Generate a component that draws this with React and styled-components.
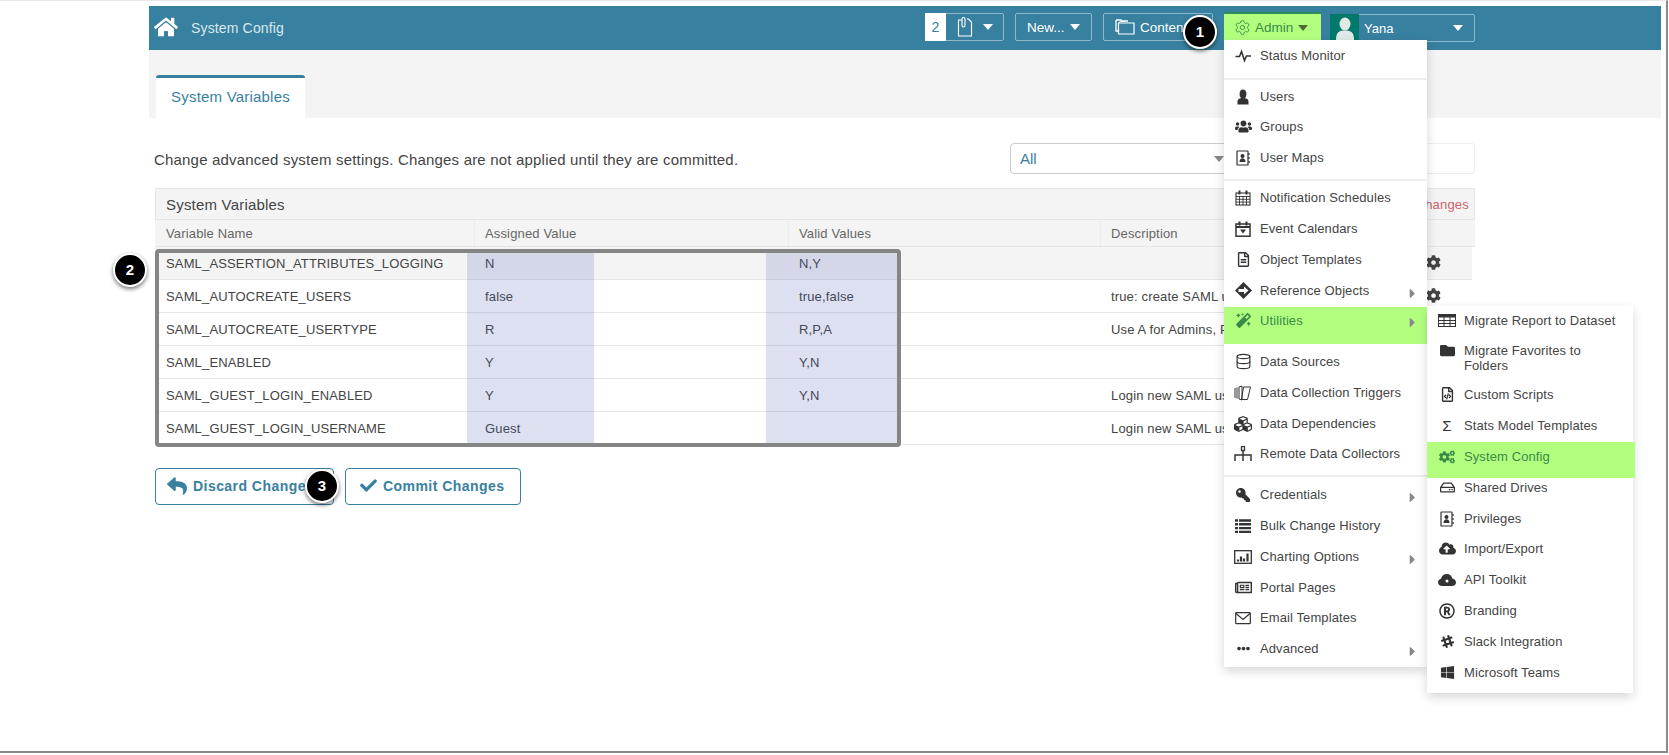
import React from "react";
import styled, { createGlobalStyle } from "styled-components";
import {
  FaHome, FaUsers, FaRegFileAlt, FaMagic, FaCubes, FaKey,
  FaRegNewspaper, FaEllipsisH, FaFolder, FaRegFileCode, FaCogs,
  FaRegHdd, FaCloudUploadAlt, FaRegRegistered, FaSlackHash, FaWindows, FaReply, FaCheck, FaCog,
  FaCaretRight,
} from "react-icons/fa";
import { Database, Settings } from "lucide-react";

const Global = createGlobalStyle`
  html, body { margin: 0; padding: 0; background: #fff; }
  body { font-family: "Liberation Sans", Arial, sans-serif; overflow: hidden; }
  * { box-sizing: border-box; }
`;

const Frame = styled.div`
  position: relative;
  width: 1668px;
  height: 753px;
  padding: 6px 5px 0 149px;
  background: #fff;
  border-top: 1px solid #e8e8e8;
  border-right: 2px solid #8a8a8a;
  border-bottom: 2px solid #8a8a8a;
  overflow: hidden;
`;
const Bar = styled.header`
  height: 44px;
  margin-top: -1px;
  background: #38809f;
  display: flex;
  align-items: flex-start;
  padding: 7px 186px 0 5px;
`;
const Home = styled.div`
  color: #fff;
  font-size: 24px;
  line-height: 0;
  margin-top: 2px;
`;
const Crumb = styled.div`
  color: #d9e8ee;
  font-size: 14px;
  letter-spacing: 0.15px;
  line-height: 16px;
  margin: 7px auto 0 13px;
`;
const NavBtn = styled.div`
  display: flex;
  align-items: center;
  width: ${(p) => p.$w}px;
  height: 28px;
  margin-left: ${(p) => p.$ml ?? 11}px;
  border: 1px solid #8fb9ca;
  border-radius: 2px;
  color: #fff;
  font-size: 13.5px;
  padding-left: ${(p) => p.$pl ?? 0}px;
`;
const NavIcon = styled.span`
  display: flex;
  margin-left: ${(p) => p.$ml}px;
`;
const NavText = styled.span`
  margin-left: 5px;
`;
const Count = styled.span`
  width: 21px;
  height: 28px;
  margin: -1px 0 -1px -1px;
  background: #fff;
  color: #38809f;
  font-size: 14px;
  line-height: 28px;
  text-align: center;
`;
const Caret = styled.span`
  display: inline-block;
  width: 0;
  height: 0;
  border-left: 5.5px solid transparent;
  border-right: 5.5px solid transparent;
  border-top: 6px solid ${(p) => p.$c || "#fff"};
  margin-left: ${(p) => p.$ml ?? 5}px;
  margin-right: ${(p) => p.$mr ?? 0}px;
`;
const AdminBtn = styled.div`
  display: flex;
  align-items: center;
  width: 97px;
  height: 29px;
  margin: -1px 0 0 11px;
  padding-left: 10px;
  background: #b2ff80;
  border-top: 2px solid #2e8b57;
  color: #3a8a46;
  font-size: 13.5px;
  gap: 4px;
`;
const UserBtn = styled.div`
  display: flex;
  align-items: center;
  width: 145px;
  height: 28px;
  margin: 1px 0 0 9px;
  border: 1px solid #8fb9ca;
  border-radius: 2px;
  color: #fff;
  font-size: 13px;
`;
const Avatar = styled.span`
  width: 29px;
  height: 28px;
  margin: -1px 0 -1px -1px;
  background: #00796b;
  color: #dfe9e6;
  display: flex;
  align-items: center;
  justify-content: center;
  overflow: hidden;
`;
const UserName = styled.span`
  margin: 0 auto 0 5px;
`;
const Band = styled.div`
  height: 68px;
  background: #f4f4f4;
  padding: 25px 0 0 7px;
`;
const Tab = styled.div`
  width: 149px;
  height: 43px;
  background: #fff;
  border-top: 3px solid #38809f;
  border-radius: 3px 3px 0 0;
  color: #38809f;
  font-size: 15px;
  letter-spacing: 0.2px;
  line-height: 37px;
  text-align: center;
`;
const Main = styled.main`
  width: 1326px;
  padding: 25px 0 0 6px;
`;
const Intro = styled.div`
  display: flex;
  align-items: center;
  height: 31px;
`;
const IntroText = styled.p`
  margin: 1px auto 0 -1px;
  font-size: 15px;
  letter-spacing: 0.19px;
  color: #444;
`;
const Select = styled.div`
  width: 225px;
  height: 31px;
  border: 1px solid #ccc;
  border-radius: 4px 0 0 4px;
  display: flex;
  align-items: center;
  justify-content: space-between;
  padding: 0 10px 0 9px;
  color: #38809f;
  font-size: 15px;
`;
const Search = styled.div`
  width: 240px;
  height: 31px;
  border: 1px solid #eee;
  border-left: 0;
  border-radius: 0 4px 4px 0;
`;
const Table = styled.section`
  margin-top: 14px;
`;
const TitleRow = styled.div`
  height: 32px;
  display: flex;
  align-items: center;
  justify-content: space-between;
  padding: 0 5px 0 10px;
  background: #f4f4f4;
  border: 1px solid #e6e6e6;
  font-size: 15px;
  letter-spacing: 0.2px;
  color: #444;
`;
const Pending = styled.span`
  color: #c9636b;
  font-size: 13px;
`;
const Grid = styled.div`
  display: grid;
  grid-template-columns: 319px 314px 312px 1fr 46px;
  height: ${(p) => p.$h}px;
  align-items: center;
  margin-right: ${(p) => (p.$head ? 0 : 3)}px;
  background: ${(p) => (p.$shade ? "#f4f4f4" : "#fff")};
  border-bottom: 1px solid #e6e6e6;
  font-size: 13px;
  letter-spacing: 0.15px;
  color: ${(p) => (p.$head ? "#666" : "#444")};
`;
const Cell = styled.div`
  padding: 0 0 0 11px;
  white-space: nowrap;
  overflow: hidden;
  height: 100%;
  display: flex;
  align-items: center;
  box-shadow: ${(p) => (p.$sep ? "inset 1px 0 0 #ececec" : "none")};
`;
const GearCell = styled.div`
  color: #444;
  line-height: 0;
  margin-top: -2px;
`;
const Actions = styled.div`
  display: flex;
  gap: 11px;
  margin-top: 23px;
`;
const Action = styled.button`
  display: flex;
  align-items: center;
  gap: ${(p) => p.$gap}px;
  width: ${(p) => p.$w}px;
  height: 37px;
  padding: 0 0 2px ${(p) => p.$pl}px;
  background: #fff;
  border: 1px solid #38809f;
  border-radius: 4px;
  color: #38809f;
  font: bold 14px "Liberation Sans", Arial, sans-serif;
  letter-spacing: 0.45px;
  white-space: nowrap;
  overflow: hidden;
`;
const Highlight = styled.div`
  position: absolute;
  top: 249px;
  height: 195px;
  left: ${(p) => p.$x}px;
  width: ${(p) => p.$w}px;
  background: rgba(80, 100, 180, 0.2);
`;
const Box = styled.div`
  position: absolute;
  left: 155px;
  top: 248px;
  width: 746px;
  height: 198px;
  border: 4px solid #858585;
  border-radius: 4px;
`;
const Badge = styled.div`
  position: absolute;
  left: ${(p) => p.$x - 17}px;
  top: ${(p) => p.$y - 17}px;
  width: 34px;
  height: 34px;
  border-radius: 50%;
  background: #000;
  border: 2px solid #fff;
  box-shadow: 0 2px 4px rgba(0, 0, 0, 0.55);
  color: #fff;
  font-size: 15px;
  font-weight: bold;
  line-height: 30px;
  text-align: center;
`;
const Menu = styled.nav`
  position: absolute;
  left: ${(p) => p.$x}px;
  top: ${(p) => p.$y}px;
  width: ${(p) => p.$w}px;
  padding-bottom: ${(p) => p.$pb}px;
  background: #fff;
  box-shadow: 0 4px 10px rgba(0, 0, 0, 0.16);
`;
const Section = styled.div`
  padding: ${(p) => p.$pt}px 0 ${(p) => p.$pb}px;
  border-bottom: ${(p) => (p.$line ? "2px solid #eee" : "0")};
`;
const Item = styled.div`
  position: relative;
  display: flex;
  align-items: flex-start;
  gap: 7px;
  height: ${(p) => p.$h || 31}px;
  margin-top: ${(p) => p.$mt || 0}px;
  margin-right: ${(p) => p.$mr || 0}px;
  padding: ${(p) => p.$pt ?? 8}px 14px 0 ${(p) => p.$pl}px;
  background: ${(p) => (p.$on ? "#b2ff80" : "transparent")};
  color: ${(p) => (p.$on ? "#3a8a46" : "#444")};
  font-size: 13px;
  letter-spacing: 0.1px;
  line-height: 15px;
`;
const Glyph = styled.span`
  flex: 0 0 20px;
  height: 15px;
  display: flex;
  align-items: center;
  justify-content: center;
  font-size: 15px;
  color: ${(p) => (p.$on ? "#3a8a46" : "#333")};
`;
const Flip = styled.span`
  display: flex;
  transform: scaleX(-1);
`;
const Sub = styled.span`
  position: absolute;
  right: 7px;
  top: ${(p) => p.$t ?? 11}px;
  color: #888;
  display: flex;
`;

const Svg = ({ w = 16, h = 16, vb, children }) => (
  <svg width={w} height={h} viewBox={vb || `0 0 ${w} ${h}`} fill="none" stroke="currentColor">{children}</svg>
);
const Pulse = () => (
  <Svg w={17}><path d="M0.5 8.5h4l2-5 3 9 2-4.500h4.500" strokeWidth="1.6" /></Svg>
);
const UserIcon = () => (
  <Svg w={14}>
    <ellipse cx="7" cy="5" rx="3.400" ry="4.500" fill="currentColor" stroke="none" />
    <path d="M1.500 15.500v-3c0-2.500 2.500-3.500 5.500-3.500s5.500 1 5.500 3.500v3z" fill="currentColor" stroke="none" />
  </Svg>
);
const BookIcon = () => (
  <Svg>
    <rect x="2" y="1" width="11" height="14" strokeWidth="1.2" rx="0.6" />
    <path d="M14 3v2M14 7v2M14 11v2" strokeWidth="1.2" />
    <circle cx="7.500" cy="6" r="2" fill="currentColor" stroke="none" />
    <path d="M4.500 12c0-5 6-5 6 0z" fill="currentColor" stroke="none" />
  </Svg>
);
const GridCal = () => (
  <Svg>
    <rect x="1" y="3" width="14" height="12" strokeWidth="1.100" />
    <path d="M1 6.500h14M1 9.300h14M1 12.100h14M4.500 6v9M8 6v9M11.500 6v9" strokeWidth="0.9" />
    <path d="M4.500 0.500v4M11.500 0.500v4" strokeWidth="2" />
  </Svg>
);
const EventCal = () => (
  <Svg>
    <rect x="1" y="3" width="14" height="12.200" strokeWidth="1.500" />
    <path d="M1 6h14" strokeWidth="2" />
    <path d="M4.500 0.500v4M11.500 0.500v4" strokeWidth="2" />
    <path d="M5 8.500h6L8 12.500z" fill="currentColor" stroke="none" />
  </Svg>
);
const SignIcon = () => (
  <Svg w={17} h={17}>
    <path d="M8.500 0L17 8.500 8.500 17 0 8.500z" fill="currentColor" stroke="none" />
    <path d="M3.500 7h5.500V4.500l4.500 4-4.500 4V10H3.500z" fill="#fff" stroke="none" />
  </Svg>
);
const CardsIcon = () => (
  <Svg w={18}>
    <path d="M1 3v10M3 2.500v11" strokeWidth="1" />
    <path d="M5 2l3-1v14l-3-1zM9.500 2h7l-3 12.500h-6z" strokeWidth="1" />
  </Svg>
);
const TreeIcon = () => (
  <Svg w={18}>
    <rect x="7.500" y="0.500" width="3" height="4" strokeWidth="1.300" />
    <path d="M9 4.500V15M1 15V9h16v6" strokeWidth="1.500" />
  </Svg>
);
const ChartIcon = () => (
  <Svg w={18}>
    <rect x="0.700" y="1.700" width="16.600" height="12.600" strokeWidth="1.300" />
    <path d="M4 12.500v-2M7 12.500v-5M10 12.500v-3M13.500 12.500v-8" strokeWidth="2.200" />
  </Svg>
);
const CloudGear = () => (
  <Svg w={18}>
    <path d="M4.500 14C1.500 14 0 12.300 0 10.200 0 8.300 1.300 7 3 6.700 3.600 3.800 6 2 8.800 2c3 0 5 2 5.500 4.600C16.400 7 18 8.400 18 10.400 18 12.500 16.300 14 14 14z" fill="currentColor" stroke="none" />
    <circle cx="9" cy="9" r="1.500" fill="#fff" stroke="none" />
  </Svg>
);
const ClipDoc = () => (
  <Svg w={16} h={20}>
    <path d="M5 3H1.500v16h13V5L11.500 2H10M5 3v5.500a1.500 1.500 0 0 0 3 0V2a1.500 1.500 0 0 0-3 0v1z" strokeWidth="1.100" />
  </Svg>
);
const Folders = () => (
  <Svg w={20} h={18}>
    <path d="M1 2h5l1 1h6M1 2v11h2" strokeWidth="1.300" />
    <path d="M3.500 5h15.500v11H3.500z" strokeWidth="1.200" />
    <path d="M3.500 5l2-1.500h5" strokeWidth="1" />
  </Svg>
);
const ThList = () => (
  <Svg>
    <path d="M0 2.500h3M4 2.500h12M0 6.300h3M4 6.300h12M0 10.100h3M4 10.100h12M0 13.900h3M4 13.900h12" strokeWidth="2.400" />
  </Svg>
);
const EnvelopeIcon = () => (
  <Svg>
    <rect x="0.700" y="2.700" width="14.600" height="11" rx="0.800" strokeWidth="1.200" />
    <path d="M1 3.500l7 6 7-6" strokeWidth="1.200" />
  </Svg>
);
const GridTable = () => (
  <Svg w={18}>
    <rect x="0.500" y="1.500" width="17" height="12" strokeWidth="1" />
    <path d="M0.500 3h17" strokeWidth="3" />
    <path d="M0.500 7.500h17M0.500 10.500h17M6 2v11M12 2v11" strokeWidth="1" />
  </Svg>
);
const Person = () => (
  <svg width="22" height="26" viewBox="0 0 22 26" fill="currentColor">
    <ellipse cx="11" cy="9" rx="5.500" ry="6.500" />
    <path d="M2 25c0-8 3-9.500 9-9.500S20 17 20 25z" />
  </svg>
);

const mainSections = [
  { pt: 0, pb: 7, line: true, items: [["Status Monitor", <Pulse />]] },
  { pt: 1, pb: 6, line: true, items: [["Users", <UserIcon />, { h: 30 }], ["Groups", <FaUsers size={17} />], ["User Maps", <BookIcon />]] },
  {
    pt: 1, pb: 2, items: [
      ["Notification Schedules", <GridCal />],
      ["Event Calendars", <EventCal />],
      ["Object Templates", <FaRegFileAlt />],
      ["Reference Objects", <SignIcon />, { sub: true }],
      ["Utilities", <FaMagic />, { on: true, h: 37, pt: 6, mt: 1, sub: true, st: 8 }],
    ],
  },
  {
    pt: 0, pb: 6, line: true, items: [
      ["Data Sources", <Database size={17} strokeWidth={1.6} />],
      ["Data Collection Triggers", <CardsIcon />],
      ["Data Dependencies", <FaCubes size={18} />, { h: 30 }],
      ["Remote Data Collectors", <TreeIcon />],
    ],
  },
  {
    pt: 2, pb: 0, items: [
      ["Credentials", <Flip><FaKey size={14} /></Flip>, { sub: true }],
      ["Bulk Change History", <ThList />],
      ["Charting Options", <ChartIcon />, { sub: true }],
      ["Portal Pages", <FaRegNewspaper size={17} />, { h: 30 }],
      ["Email Templates", <EnvelopeIcon />],
      ["Advanced", <FaEllipsisH size={13} />, { sub: true }],
    ],
  },
];
const subItems = [
  ["Migrate Report to Dataset", <GridTable />, { h: 30 }],
  ["Migrate Favorites to Folders", <FaFolder />, { h: 44 }],
  ["Custom Scripts", <FaRegFileCode />, {}],
  ["Stats Model Templates", "Σ", {}],
  ["System Config", <FaCogs size={16} />, { on: true, h: 36, mr: -2 }],
  ["Shared Drives", <FaRegHdd />, { h: 26, pt: 2 }],
  ["Privileges", <BookIcon />, { h: 30 }],
  ["Import/Export", <FaCloudUploadAlt size={17} />, {}],
  ["API Toolkit", <CloudGear />, {}],
  ["Branding", <FaRegRegistered size={16} />, {}],
  ["Slack Integration", <FaSlackHash />, {}],
  ["Microsoft Teams", <FaWindows />, {}],
];
const rows = [
  ["SAML_ASSERTION_ATTRIBUTES_LOGGING", "N", "N,Y", ""],
  ["SAML_AUTOCREATE_USERS", "false", "true,false", "true: create SAML users automatically"],
  ["SAML_AUTOCREATE_USERTYPE", "R", "R,P,A", "Use A for Admins, P for Power Users"],
  ["SAML_ENABLED", "Y", "Y,N", ""],
  ["SAML_GUEST_LOGIN_ENABLED", "Y", "Y,N", "Login new SAML users as guest"],
  ["SAML_GUEST_LOGIN_USERNAME", "Guest", "", "Login new SAML users as this user"],
];

export default function App() {
  return (
    <>
      <Global />
      <Frame>
        <Bar>
          <Home><FaHome /></Home>
          <Crumb>System Config</Crumb>
          <NavBtn $w={79} $ml={0}>
            <Count>2</Count>
            <NavIcon $ml={11}><ClipDoc /></NavIcon>
            <Caret $ml={10} />
          </NavBtn>
          <NavBtn $w={77} $pl={11}>New...<Caret /></NavBtn>
          <NavBtn $w={110} $pl={11}><Folders /><NavText>Content</NavText></NavBtn>
          <AdminBtn><Settings size={17} strokeWidth={1.3} />Admin<Caret $c="#4d6b33" $ml={1} /></AdminBtn>
          <UserBtn>
            <Avatar><Person /></Avatar>
            <UserName>Yana</UserName>
            <Caret $ml={0} $mr={11} />
          </UserBtn>
        </Bar>
        <Band><Tab>System Variables</Tab></Band>
        <Main>
          <Intro>
            <IntroText>Change advanced system settings. Changes are not applied until they are committed.</IntroText>
            <Select>All<Caret $c="#888" /></Select>
            <Search />
          </Intro>
          <Table>
            <TitleRow>System Variables<Pending>Changes</Pending></TitleRow>
            <Grid $h={27} $head $shade>
              <Cell>Variable Name</Cell>
              <Cell $sep>Assigned Value</Cell>
              <Cell $sep>Valid Values</Cell>
              <Cell $sep>Description</Cell>
              <span />
            </Grid>
            {rows.map((r, i) => (
              <Grid key={r[0]} $h={33} $shade={i === 0}>
                <Cell>{r[0]}</Cell>
                <Cell>{r[1]}</Cell>
                <Cell>{r[2]}</Cell>
                <Cell>{r[3]}</Cell>
                <GearCell><FaCog size={15} /></GearCell>
              </Grid>
            ))}
          </Table>
          <Actions>
            <Action $w={179} $pl={11} $gap={6}><FaReply size={20} />Discard Changes</Action>
            <Action $w={176} $pl={14} $gap={6}><FaCheck size={17} />Commit Changes</Action>
          </Actions>
        </Main>

        <Highlight $x={467} $w={127} />
        <Highlight $x={766} $w={132} />
        <Box />

        <Menu $x={1224} $y={39} $w={203} $pb={3}>
          {mainSections.map((s, i) => (
            <Section key={i} $pt={s.pt} $pb={s.pb} $line={s.line}>
              {s.items.map(([label, icon, o = {}]) => (
                <Item key={label} $pl={9} $on={o.on} $h={o.h} $pt={o.pt} $mt={o.mt}>
                  <Glyph $on={o.on}>{icon}</Glyph>
                  {label}
                  {o.sub && <Sub $t={o.st}><FaCaretRight size={15} /></Sub>}
                </Item>
              ))}
            </Section>
          ))}
        </Menu>
        <Menu $x={1427} $y={305} $w={206} $pb={4}>
          {subItems.map(([label, icon, o]) => (
            <Item key={label} $pl={10} $on={o.on} $h={o.h} $pt={o.pt ?? 7} $mr={o.mr}>
              <Glyph $on={o.on}>{icon}</Glyph>
              <span>{label}</span>
            </Item>
          ))}
        </Menu>

        <Badge $x={1200} $y={31}>1</Badge>
        <Badge $x={130} $y={269}>2</Badge>
        <Badge $x={322} $y={485}>3</Badge>
      </Frame>
    </>
  );
}
